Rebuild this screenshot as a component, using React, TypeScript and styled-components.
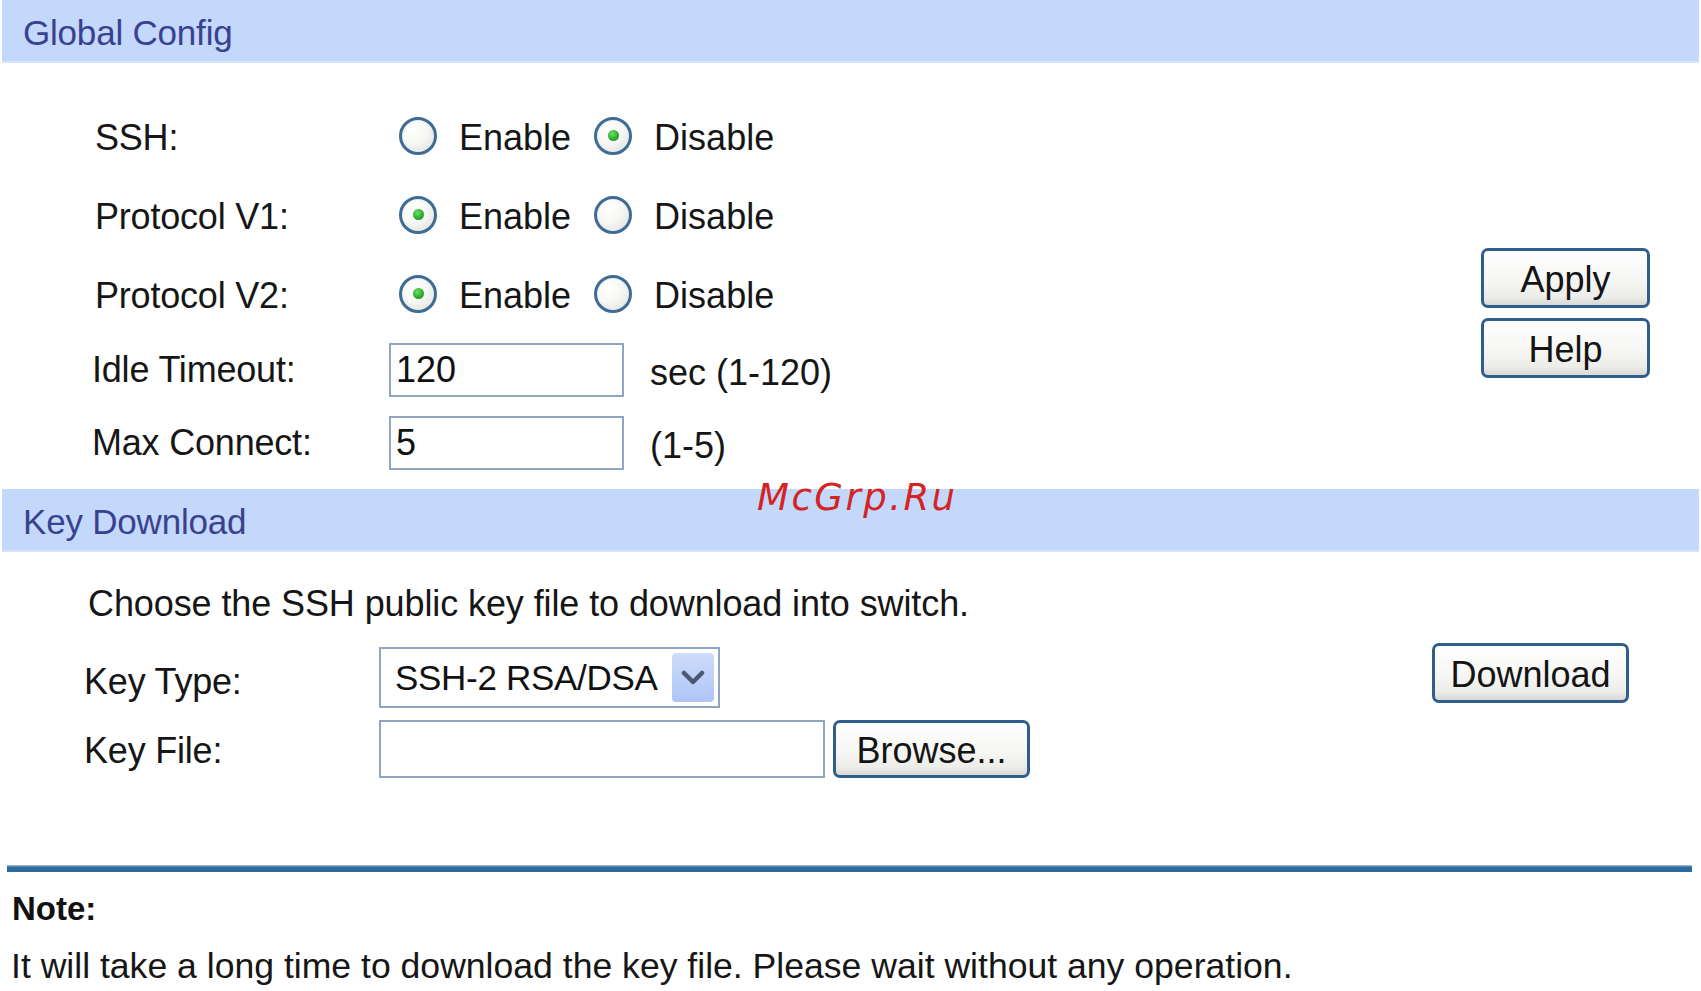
import React from "react";
import styled, { createGlobalStyle } from "styled-components";

const GlobalStyle = createGlobalStyle`
  html, body { margin: 0; padding: 0; background: #ffffff; }
  body { font-family: "Liberation Sans", Arial, sans-serif; color: #161616; }
  * { box-sizing: border-box; }
`;

const Page = styled.div`
  position: relative;
  width: 1701px;
  height: 991px;
  overflow: hidden;
  background: #fff;
`;

const SectionHeader = styled.div<{ $top?: number }>`
  margin: ${(p) => p.$top ?? 0}px 2px 0 2px;
  height: 63px;
  background: #c4d8fc;
  border-bottom: 2px solid #d6e3fb;
  display: flex;
  align-items: center;
  padding: 5px 0 0 21px;
  font-size: 35px;
  color: #3a4290;
  letter-spacing: -0.2px;
`;

const Body = styled.div<{ $pt: number; $pr: number }>`
  display: flex;
  justify-content: space-between;
  align-items: flex-start;
  padding: ${(p) => p.$pt}px ${(p) => p.$pr}px 0 0;
`;

const Form = styled.div`
  display: flex;
  flex-direction: column;
`;

const FormRow = styled.div<{ $h: number }>`
  display: flex;
  align-items: center;
  height: ${(p) => p.$h}px;
  font-size: 36px;
`;

const Label = styled.span<{ $left: number; $width: number; $dy?: number }>`
  display: block;
  width: ${(p) => p.$width}px;
  padding-left: ${(p) => p.$left}px;
  position: relative;
  top: ${(p) => p.$dy ?? 0}px;
  white-space: nowrap;
  letter-spacing: -0.2px;
`;

const RadioGroup = styled.div`
  display: flex;
  align-items: center;
  gap: 23px;
  padding-left: 10px;
`;

const RadioOption = styled.label`
  display: inline-flex;
  align-items: center;
  gap: 22px;
  white-space: nowrap;
`;

const RadioText = styled.span`
  position: relative;
  top: 2px;
`;

const RadioCircle = styled.span<{ $checked: boolean }>`
  position: relative;
  display: inline-block;
  width: 38px;
  height: 38px;
  border-radius: 50%;
  border: 3px solid #3f6c94;
  background: radial-gradient(circle at 35% 30%, #ffffff 0%, #f7f7f5 45%, #dcdcd8 100%);
  box-shadow: inset 0 0 0 1px #e9edf2;
  &::after {
    content: "";
    display: ${(p) => (p.$checked ? "block" : "none")};
    position: absolute;
    left: 50%;
    top: 50%;
    width: 11px;
    height: 11px;
    margin: -5.5px 0 0 -5.5px;
    border-radius: 50%;
    background: radial-gradient(circle at 40% 35%, #6ee06e 0%, #25a825 60%, #1a8a1a 100%);
  }
`;

const TextBox = styled.div<{ $w: number; $h: number }>`
  width: ${(p) => p.$w}px;
  height: ${(p) => p.$h}px;
  border: 2px solid #8fa5c0;
  background: #fff;
  display: flex;
  align-items: center;
  padding-left: 5px;
  font-size: 36px;
  color: #111;
`;

const Unit = styled.span`
  margin-left: 26px;
  position: relative;
  top: 3px;
  white-space: nowrap;
`;

const ButtonCol = styled.div<{ $mt: number }>`
  display: flex;
  flex-direction: column;
  gap: 10px;
  margin-top: ${(p) => p.$mt}px;
`;

const Button = styled.button<{ $w: number; $h: number; $ml?: number }>`
  width: ${(p) => p.$w}px;
  height: ${(p) => p.$h}px;
  margin-left: ${(p) => p.$ml ?? 0}px;
  border: 3px solid #2f5e8c;
  border-radius: 7px;
  background: linear-gradient(#fefefe 0%, #f6f6f4 55%, #ecece8 85%, #d8d8d4 100%);
  font-family: "Liberation Sans", Arial, sans-serif;
  font-size: 36px;
  color: #141414;
  padding: 3px 0 0 0;
  display: flex;
  align-items: center;
  justify-content: center;
  cursor: pointer;
`;

const Intro = styled.div`
  padding-left: 88px;
  font-size: 36px;
  line-height: 44px;
  white-space: nowrap;
  letter-spacing: -0.1px;
`;

const KeyRows = styled.div`
  display: flex;
  flex-direction: column;
  gap: 12px;
  margin-top: 21px;
`;

const Select = styled.div`
  width: 341px;
  height: 61px;
  border: 2px solid #8fa5c0;
  background: #fff;
  display: flex;
  align-items: center;
  justify-content: space-between;
  padding: 0 4px 0 14px;
  font-size: 35px;
  letter-spacing: -0.3px;
  color: #111;
`;

const SelectArrow = styled.span`
  width: 42px;
  height: 49px;
  border-radius: 4px;
  background: linear-gradient(#cddcfc, #aec5f6);
  display: flex;
  align-items: center;
  justify-content: center;
`;

const Divider = styled.div`
  margin: 87px 9px 0 7px;
  height: 7px;
  background: linear-gradient(#b5c9da 0%, #2f6c9c 30%, #2c6898 100%);
`;

const NoteTitle = styled.div`
  margin-top: 17px;
  padding-left: 12px;
  font-size: 33px;
  line-height: 40px;
  font-weight: bold;
  color: #111;
`;

const NoteText = styled.div`
  margin-top: 15px;
  padding-left: 11px;
  font-size: 35.6px;
  line-height: 44px;
  white-space: nowrap;
  color: #161616;
`;

const Watermark = styled.div`
  position: absolute;
  left: 757px;
  top: 476px;
  font-family: "DejaVu Sans", sans-serif;
  font-style: italic;
  font-size: 37px;
  letter-spacing: 2.5px;
  color: #d42525;
  pointer-events: none;
`;

type RadioRowProps = { label: string; enabled: boolean };

const RadioRow = ({ label, enabled }: RadioRowProps) => (
  <FormRow $h={79}>
    <Label $left={95} $width={389} $dy={2}>
      {label}
    </Label>
    <RadioGroup>
      <RadioOption>
        <RadioCircle $checked={enabled} />
        <RadioText>Enable</RadioText>
      </RadioOption>
      <RadioOption>
        <RadioCircle $checked={!enabled} />
        <RadioText>Disable</RadioText>
      </RadioOption>
    </RadioGroup>
  </FormRow>
);

export default function App() {
  return (
    <Page>
      <GlobalStyle />
      <SectionHeader>Global Config</SectionHeader>
      <Body $pt={33} $pr={51}>
        <Form>
          <RadioRow label="SSH:" enabled={false} />
          <RadioRow label="Protocol V1:" enabled={true} />
          <RadioRow label="Protocol V2:" enabled={true} />
          <FormRow $h={73}>
            <Label $left={92} $width={389}>
              Idle Timeout:
            </Label>
            <TextBox $w={235} $h={54}>120</TextBox>
            <Unit>sec (1-120)</Unit>
          </FormRow>
          <FormRow $h={73}>
            <Label $left={92} $width={389}>
              Max Connect:
            </Label>
            <TextBox $w={235} $h={54}>5</TextBox>
            <Unit>(1-5)</Unit>
          </FormRow>
        </Form>
        <ButtonCol $mt={152}>
          <Button $w={169} $h={60}>Apply</Button>
          <Button $w={169} $h={60}>Help</Button>
        </ButtonCol>
      </Body>

      <SectionHeader $top={10}>Key Download</SectionHeader>
      <Body $pt={30} $pr={72}>
        <Form>
          <Intro>Choose the SSH public key file to download into switch.</Intro>
          <KeyRows>
            <FormRow $h={61}>
              <Label $left={84} $width={379} $dy={4}>
                Key Type:
              </Label>
              <Select>
                <span>SSH-2 RSA/DSA</span>
                <SelectArrow>
                  <svg width="24" height="16" viewBox="0 0 24 16">
                    <path d="M3 3 L12 12 L21 3" fill="none" stroke="#4a5873" strokeWidth="4.5" strokeLinecap="round" strokeLinejoin="round" />
                  </svg>
                </SelectArrow>
              </Select>
            </FormRow>
            <FormRow $h={58}>
              <Label $left={84} $width={379} $dy={2}>
                Key File:
              </Label>
              <TextBox $w={446} $h={58} />
              <Button $w={197} $h={58} $ml={8}>Browse...</Button>
            </FormRow>
          </KeyRows>
        </Form>
        <ButtonCol $mt={61}>
          <Button $w={197} $h={60}>Download</Button>
        </ButtonCol>
      </Body>

      <Divider />
      <NoteTitle>Note:</NoteTitle>
      <NoteText>It will take a long time to download the key file. Please wait without any operation.</NoteText>

      <Watermark>McGrp.Ru</Watermark>
    </Page>
  );
}
